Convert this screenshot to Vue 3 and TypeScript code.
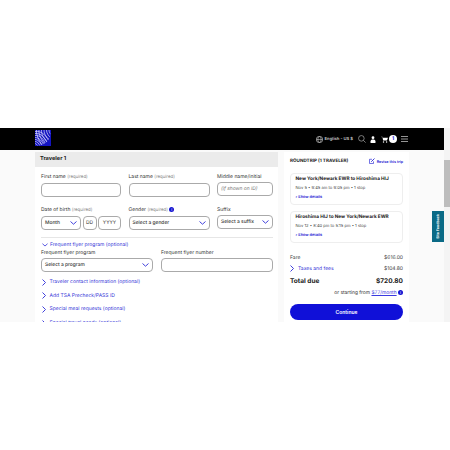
<template>
  <div class="page">
    <div class="viewport">
      <div class="main-col">
        <header class="topbar">
          <div class="logo">
            <svg width="16" height="16" viewBox="0 0 16 16">
              <defs>
                <clipPath id="globe"><circle cx="3" cy="3" r="12.5" /></clipPath>
              </defs>
              <rect width="16" height="16" fill="#1414c0" />
              <g clip-path="url(#globe)" fill="none" stroke="#dfe0ff" stroke-width="0.7">
                <path d="M0 1.5C6 0.5 12 5 15.5 15M0 3.5C6 3 10 7 13.5 16M0 5.5C5 5 9 9 11.5 16M0 7.5C4 7.5 7 11 9.5 16M0 9.5C3 9.5 5.5 12.5 7 16M0 11.5C2 11.5 4 13.5 5 16M0 13.5C1 13.5 2 15 3 16" />
                <path d="M1.5 0C1 5 4 11 8 16M4 0C3.5 5 6.5 10.5 11.5 15.5M6.5 0C6 4.5 9 9 14 13.5M9 0C9 4 11.5 8 16 11M11.5 0C11.5 3 13.5 6 16 8M14 0C14 2 15 3.5 16 4.5" />
              </g>
            </svg>
          </div>
          <div class="top-actions">
            <svg class="ic" width="7" height="7" viewBox="0 0 10 10">
              <circle cx="5" cy="5" r="4.5" fill="none" stroke="#ccc" />
              <path d="M0.5 5h9M5 0.5c-3 3-3 6 0 9M5 0.5c3 3 3 6 0 9" stroke="#ccc" stroke-width="0.8" fill="none" />
            </svg>
            <span class="lang">English - US $</span>
            <svg class="ic search" width="8" height="8" viewBox="0 0 10 10">
              <circle cx="4.2" cy="4.2" r="3.5" fill="none" stroke="#bbb" stroke-width="0.8" />
              <path d="M6.8 6.8L9.5 9.5" stroke="#bbb" stroke-width="0.8" />
            </svg>
            <svg class="ic user" width="6" height="7" viewBox="0 0 8 10">
              <circle cx="4" cy="2.4" r="2" fill="#fff" />
              <path d="M0.5 10V7.5C0.5 5.8 2 5 4 5s3.5 0.8 3.5 2.5V10z" fill="#fff" />
            </svg>
            <svg class="ic cart" width="7" height="7" viewBox="0 0 10 10">
              <path d="M0 1h2l1 5.5h5.5L10 2.5H2.6z" fill="#fff" />
              <circle cx="3.6" cy="8.6" r="1" fill="#fff" />
              <circle cx="8" cy="8.6" r="1" fill="#fff" />
            </svg>
            <span class="count">1</span>
            <svg class="ic menu" width="7" height="6" viewBox="0 0 7 6">
              <path d="M0 0.5h7M0 3h7M0 5.5h7" stroke="#bbb" stroke-width="0.8" />
            </svg>
          </div>
        </header>

        <div class="content">
          <section class="traveler">
            <h2 class="traveler-title">Traveler 1</h2>
            <div class="form">
              <div class="row three">
                <div class="field">
                  <label>First name <em>(required)</em></label>
                  <div class="box"></div>
                </div>
                <div class="field">
                  <label>Last name <em>(required)</em></label>
                  <div class="box"></div>
                </div>
                <div class="field">
                  <label>Middle name/initial</label>
                  <div class="box hint">(if shown on ID)</div>
                </div>
              </div>

              <div class="row three second">
                <div class="field">
                  <label>Date of birth <em>(required)</em></label>
                  <div class="dob">
                    <div class="box select month">Month<svg class="chev" width="7" height="4" viewBox="0 0 7 4"><path d="M0.5 0.5L3.5 3.2L6.5 0.5" /></svg></div>
                    <div class="box small">DD</div>
                    <div class="box small year">YYYY</div>
                  </div>
                </div>
                <div class="field">
                  <label>Gender <em>(required)</em> <i class="info">i</i></label>
                  <div class="box select">Select a gender<svg class="chev" width="7" height="4" viewBox="0 0 7 4"><path d="M0.5 0.5L3.5 3.2L6.5 0.5" /></svg></div>
                </div>
                <div class="field">
                  <label>Suffix</label>
                  <div class="box select">Select a suffix<svg class="chev" width="7" height="4" viewBox="0 0 7 4"><path d="M0.5 0.5L3.5 3.2L6.5 0.5" /></svg></div>
                </div>
              </div>

              <hr class="divider" />

              <div class="toggle open">
                <svg class="chev" width="6" height="4" viewBox="0 0 7 4"><path d="M0.5 0.5L3.5 3.2L6.5 0.5" /></svg>
                <span>Frequent flyer program (optional)</span>
              </div>
              <div class="row two">
                <div class="field">
                  <label>Frequent flyer program</label>
                  <div class="box select">Select a program<svg class="chev" width="7" height="4" viewBox="0 0 7 4"><path d="M0.5 0.5L3.5 3.2L6.5 0.5" /></svg></div>
                </div>
                <div class="field">
                  <label>Frequent flyer number</label>
                  <div class="box"></div>
                </div>
              </div>

              <div v-for="item in sections" :key="item" class="toggle">
                <svg class="arrow" width="4" height="7" viewBox="0 0 4 7"><path d="M0.5 0.5L3.5 3.5L0.5 6.5" /></svg>
                <span>{{ item }}</span>
              </div>
            </div>
          </section>

          <aside class="summary">
            <div class="summary-head">
              <strong>ROUNDTRIP (1 TRAVELER)</strong>
              <span class="revise">
                <svg width="6" height="6" viewBox="0 0 8 8">
                  <path d="M6 4.5V7.3H0.7V1.7H4" fill="none" stroke="#1414d2" stroke-width="0.8" />
                  <path d="M3 5L7.3 0.7" stroke="#1414d2" stroke-width="1.1" />
                </svg>
                Revise this trip
              </span>
            </div>
            <div v-for="trip in trips" :key="trip.route" class="trip">
              <div class="route">{{ trip.route }}</div>
              <div class="when">{{ trip.when }}</div>
              <div class="details">› Show details</div>
            </div>
            <div class="price">
              <span>Fare</span>
              <span>$616.00</span>
            </div>
            <div class="price">
              <span class="taxes">
                <svg class="arrow" width="4" height="7" viewBox="0 0 4 7"><path d="M0.5 0.5L3.5 3.5L0.5 6.5" /></svg>
                Taxes and fees
              </span>
              <span>$104.80</span>
            </div>
            <div class="price total">
              <span>Total due</span>
              <span>$720.80</span>
            </div>
            <div class="monthly">or starting from <a>$77/month</a> <i class="info">i</i></div>
            <button class="continue">Continue</button>
          </aside>
        </div>
      </div>

      <div class="scrollbar"><div class="thumb"></div></div>
      <div class="feedback"><span>Site Feedback</span></div>
    </div>
  </div>
</template>

<script setup lang="ts">
const sections: string[] = [
  'Traveler contact information (optional)',
  'Add TSA Precheck/PASS ID',
  'Special meal requests (optional)',
  'Special travel needs (optional)',
];

const trips = [
  { route: 'New York/Newark EWR to Hiroshima HIJ', when: 'Nov 5 • 9:45 am to 9:05 pm • 1 stop' },
  { route: 'Hiroshima HIJ to New York/Newark EWR', when: 'Nov 12 • 8:40 pm to 5:15 pm • 1 stop' },
];
</script>

<style scoped>
.page {
  width: 450px;
  height: 450px;
  padding-top: 128px;
  box-sizing: border-box;
  background: #fff;
  font-family: Inter, "Liberation Sans", sans-serif;
  text-rendering: geometricPrecision;
  color: #222;
  overflow: hidden;
}

.viewport {
  position: relative;
  height: 194px;
  display: flex;
  overflow: hidden;
  background: #fafafa;
}

.main-col {
  flex: 1;
  min-width: 0;
}

.topbar {
  height: 22px;
  background: #000;
  display: flex;
  align-items: center;
  justify-content: space-between;
  padding: 0 36px 0 35px;
}

.logo {
  height: 16px;
  margin-bottom: 2px;
}

.top-actions {
  display: flex;
  align-items: center;
  color: #ccc;
}

.ic {
  display: block;
}

.lang {
  font-size: 4.2px;
  font-weight: 600;
  margin: 0 5px 0 1.5px;
  white-space: nowrap;
}

.user {
  margin: 0 5px 0 4px;
}

.count {
  width: 8px;
  height: 8px;
  border-radius: 50%;
  background: #fff;
  color: #1414d2;
  font-size: 5px;
  font-weight: 700;
  line-height: 8px;
  text-align: center;
  margin: 0 4px 0 1px;
}

.content {
  display: flex;
  gap: 6px;
  padding: 2px 0 0 35px;
}

.traveler {
  width: 243px;
  height: 172px;
  background: #fff;
  flex-shrink: 0;
}

.traveler-title {
  margin: 0;
  height: 15px;
  line-height: 15px;
  padding-left: 5px;
  background: #ebebeb;
  font-size: 5.6px;
  font-weight: 700;
  color: #222;
}

.form {
  padding: 6px 5px 0 6px;
}

.row {
  display: grid;
  gap: 7.5px;
}

.three {
  grid-template-columns: 80px 81px 1fr;
}

.second {
  margin-top: 8.5px;
}

.two {
  grid-template-columns: 1fr 1fr;
  gap: 8px;
}

label {
  display: block;
  font-size: 5px;
  line-height: 8px;
  color: #333;
  margin-bottom: 1px;
  white-space: nowrap;
}

em {
  font-style: normal;
  font-size: 4.4px;
  color: #888;
}

.box {
  height: 14px;
  border: 1px solid #aaa;
  border-radius: 4px;
  background: #fff;
  box-sizing: border-box;
  font-size: 4.9px;
  line-height: 12px;
  color: #333;
  padding: 0 3px;
  white-space: nowrap;
}

.select {
  display: flex;
  align-items: center;
  justify-content: space-between;
  font-weight: 500;
}

.hint {
  font-style: italic;
  color: #777;
}

.dob {
  display: flex;
  gap: 1.5px;
}

.month {
  width: 40px;
}

.small {
  width: 14px;
  padding: 0;
  text-align: center;
}

.year {
  width: 23px;
}

.info {
  display: inline-block;
  width: 5px;
  height: 5px;
  border-radius: 50%;
  background: #1414d2;
  color: #fff;
  font-size: 4px;
  line-height: 5px;
  text-align: center;
  font-style: normal;
}

.chev,
.arrow {
  flex-shrink: 0;
}

.chev path,
.arrow path {
  fill: none;
  stroke: #2a2ad8;
  stroke-width: 0.9;
}

.divider {
  border: 0;
  border-top: 1px solid #e6e6e6;
  margin: 7.5px 0 3px;
}

.toggle {
  display: flex;
  align-items: center;
  gap: 3.5px;
  font-size: 5px;
  color: #3636d8;
  height: 8px;
  margin-bottom: 5.6px;
  padding-left: 1px;
  white-space: nowrap;
}

.toggle.open {
  margin-bottom: 0.3px;
  gap: 2px;
}

.two + .toggle {
  margin-top: 6px;
}

.summary {
  width: 125px;
  height: 172px;
  background: #fff;
  box-sizing: border-box;
  padding: 5px 6px 0;
  flex-shrink: 0;
}

.summary-head {
  display: flex;
  justify-content: space-between;
  align-items: center;
  height: 8px;
  font-size: 4.6px;
  margin-bottom: 7.7px;
  white-space: nowrap;
}

.revise {
  display: flex;
  align-items: center;
  gap: 1.5px;
  color: #1414d2;
  font-size: 3.7px;
  font-weight: 600;
}

.trip {
  border: 1px solid #eee;
  border-radius: 4px;
  height: 32.5px;
  box-sizing: border-box;
  padding: 1.6px 4.5px;
  margin-bottom: 5.5px;
  white-space: nowrap;
}

.route {
  font-size: 4.75px;
  font-weight: 700;
  line-height: 8px;
}

.when {
  font-size: 4.1px;
  line-height: 10px;
  color: #444;
}

.details {
  font-size: 3.9px;
  line-height: 8px;
  color: #1414d2;
  font-weight: 600;
}

.price {
  display: flex;
  justify-content: space-between;
  font-size: 5px;
  line-height: 8px;
  margin-top: 2.7px;
  color: #444;
}

.trip + .price {
  margin-top: 11px;
}

.taxes {
  display: flex;
  align-items: center;
  gap: 4px;
  color: #3636d8;
}

.total {
  font-size: 6.5px;
  font-weight: 700;
  color: #222;
  line-height: 10px;
  margin-top: 3.3px;
}

.monthly {
  text-align: right;
  font-size: 4.9px;
  line-height: 8px;
  margin-top: 3px;
  color: #333;
}

.monthly a {
  color: #3a3ae0;
  text-decoration: underline;
}

.continue {
  display: block;
  width: 100%;
  height: 16px;
  margin-top: 7px;
  border: 0;
  border-radius: 8px;
  background: #1010d8;
  color: #fff;
  font-family: inherit;
  font-size: 5px;
  font-weight: 600;
}

.scrollbar {
  width: 6px;
  background: #f4f4f4;
  flex-shrink: 0;
  padding-top: 32px;
}

.thumb {
  height: 47px;
  background: #bdbdbd;
}

.feedback {
  position: absolute;
  right: 6px;
  top: 83px;
  width: 12px;
  height: 31px;
  background: #0b6a86;
  color: #fff;
  display: flex;
  align-items: center;
  justify-content: center;
}

.feedback span {
  writing-mode: vertical-rl;
  transform: rotate(180deg);
  font-size: 3.6px;
  font-weight: 700;
  white-space: nowrap;
}
</style>

<style>
html,
body {
  margin: 0;
  background: #fff;
}
</style>
